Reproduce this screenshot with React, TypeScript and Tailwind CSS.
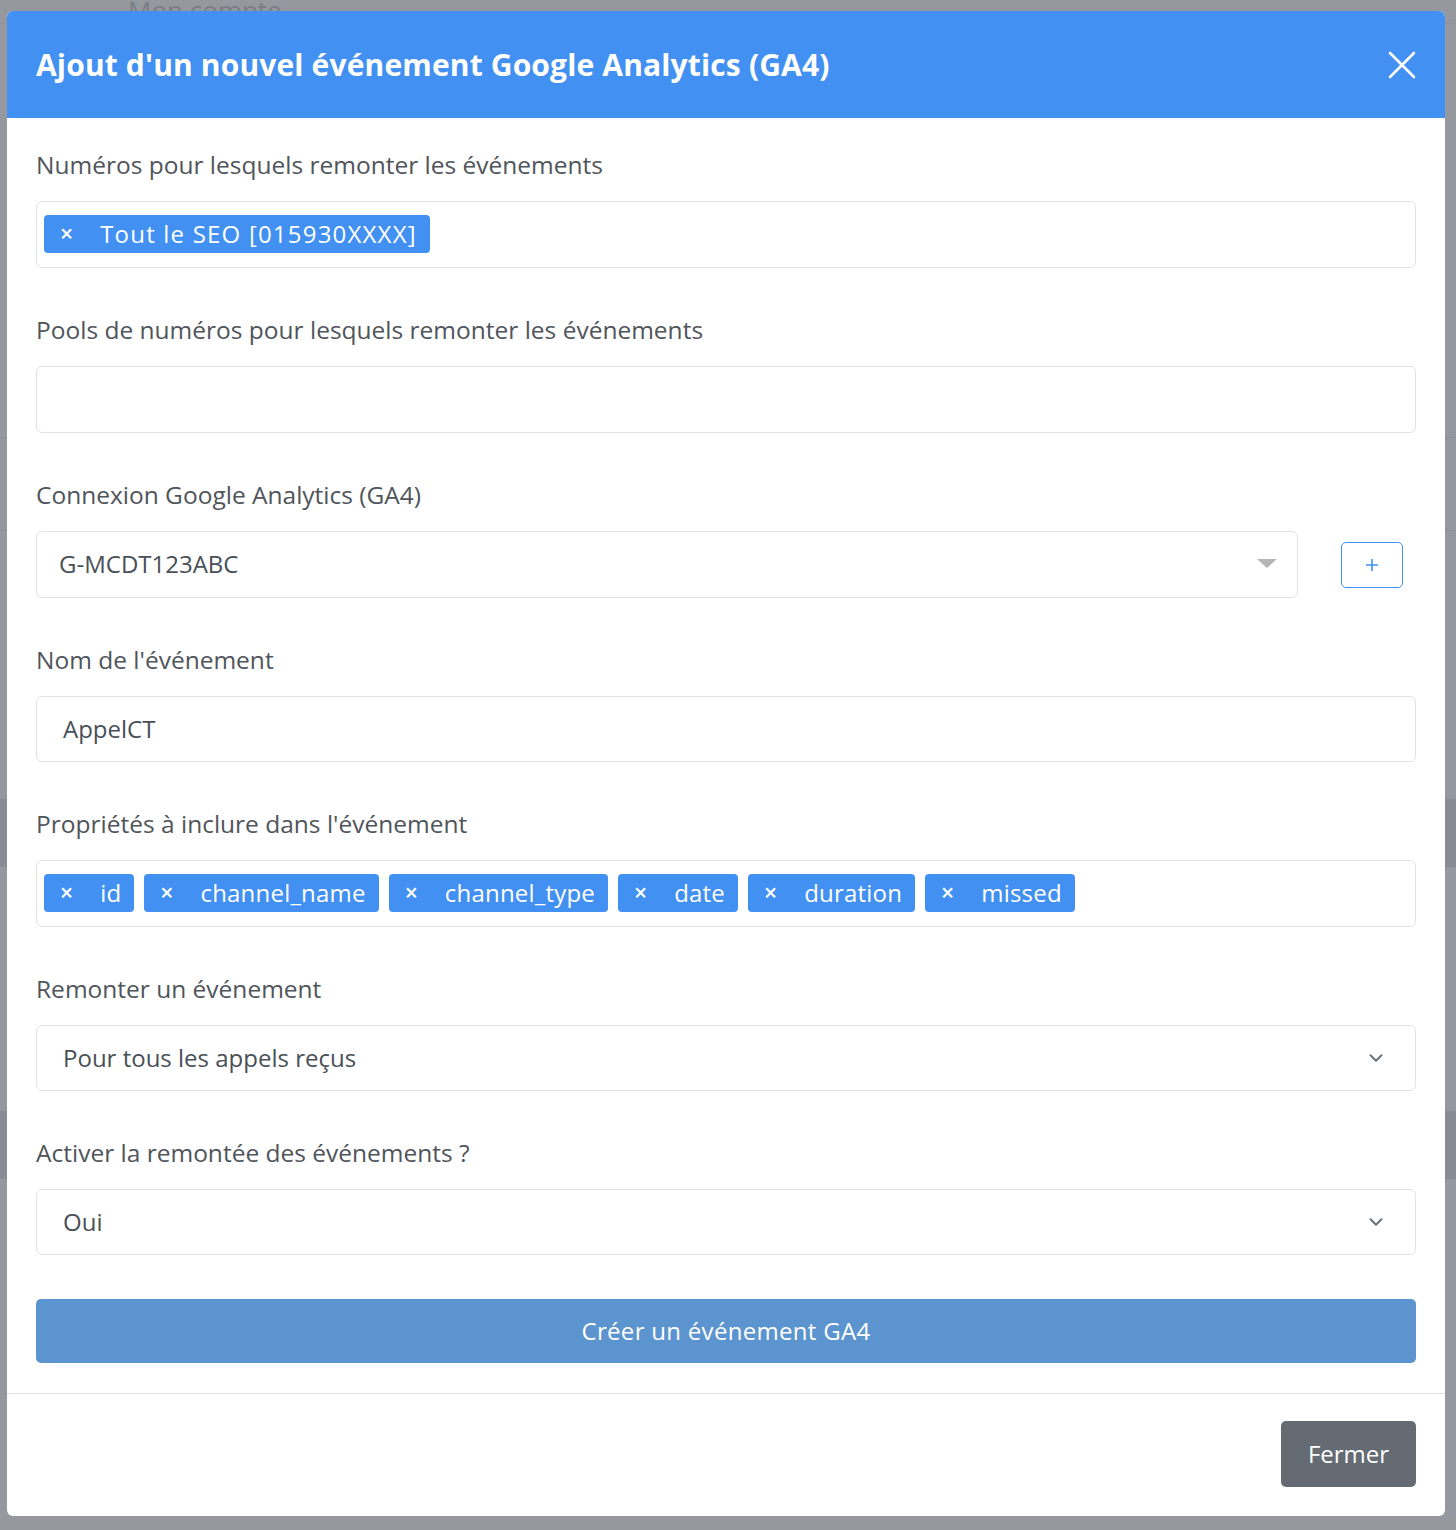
import { ChevronDown } from 'lucide-react';

const font = { fontFamily: '"Open Sans", "Noto Sans", sans-serif' };

const properties = ['id', 'channel_name', 'channel_type', 'date', 'duration', 'missed'];

function Chip({ label, wide }: { label: string; wide?: boolean }) {
  return (
    <span
      className={`flex h-[38px] items-center rounded-[4px] bg-[#4190f2] pl-[16px] pr-[13px] text-[24px] text-white ${
        wide ? 'tracking-[1.2px]' : 'tracking-[0.2px]'
      }`}
    >
      <span className="mr-[27px] text-[23px] font-semibold leading-none tracking-normal">×</span>
      {label}
    </span>
  );
}

function Label({ children }: { children: React.ReactNode }) {
  return <label className="block h-[36px] text-[24.5px] leading-[36px] text-[#4f555b]">{children}</label>;
}

function Field({ label, children }: { label: string; children: React.ReactNode }) {
  return (
    <div className="flex flex-col gap-[18px]">
      <Label>{label}</Label>
      {children}
    </div>
  );
}

function SelectBox({ value }: { value: string }) {
  return (
    <div className="flex h-[66px] items-center justify-between rounded-[6px] border border-[#dfe3e7] pl-[26px] pr-[28px] text-[24px] text-[#495057]">
      <span>{value}</span>
      <ChevronDown className="h-[22px] w-[22px] text-[#6b7178]" strokeWidth={2.2} />
    </div>
  );
}

export default function App() {
  return (
    <div className="relative h-[1530px] w-full overflow-hidden bg-[#95989f]" style={font}>
      {/* page underneath the overlay */}
      <div className="flex flex-col">
        <div className="h-[24px] border-b border-dotted border-[#8a8d95] pl-[128px] text-[26px] leading-[20px] text-[#7b7e86]">
          Mon compte
        </div>
        <div className="mt-[413px] h-[1px] bg-[#8c8f97]" />
        <div className="mt-[92px] h-[1px] bg-[#8c8f97]" />
        <div className="mt-[268px] h-[68px] bg-[#888b93]" />
        <div className="mt-[244px] h-[68px] bg-[#888b93]" />
      </div>

      <div className="absolute left-[7px] top-[11px] flex w-[1438px] flex-col overflow-hidden rounded-[6px] bg-white">
        <div className="flex h-[107px] items-center justify-between bg-[#4190f2] pl-[29px] pr-[29px]">
          <h2 className="text-[30px] font-bold tracking-[0.15px] text-white">
            Ajout d'un nouvel événement Google Analytics (GA4)
          </h2>
          <svg width="28" height="28" viewBox="0 0 28 28" className="text-white">
            <path d="M2 2L26 26M26 2L2 26" stroke="currentColor" strokeWidth="2.6" strokeLinecap="round" />
          </svg>
        </div>

        <div className="flex flex-col gap-[44px] px-[29px] pb-[30px] pt-[29px]">
          <Field label="Numéros pour lesquels remonter les événements">
            <div className="flex h-[67px] items-center rounded-[6px] border border-[#dfe3e7] px-[7px] pb-[2px]">
              <Chip label="Tout le SEO [015930XXXX]" wide />
            </div>
          </Field>

          <Field label="Pools de numéros pour lesquels remonter les événements">
            <div className="h-[67px] rounded-[6px] border border-[#dfe3e7]" />
          </Field>

          <Field label="Connexion Google Analytics (GA4)">
            <div className="flex items-center">
              <div className="flex h-[67px] w-[1262px] items-center justify-between rounded-[6px] border border-[#dfe3e7] pb-[2px] pl-[22px] pr-[20px] text-[24px] text-[#495057]">
                <span>G-MCDT123ABC</span>
                <span className="h-0 w-0 border-x-[10px] border-t-[9px] border-x-transparent border-t-[#b6b6b6]" />
              </div>
              <button className="ml-[43px] flex h-[46px] w-[62px] items-center justify-center rounded-[5px] border border-[#4190f2] text-[#4190f2]">
                <svg width="14" height="14" viewBox="0 0 14 14">
                  <path d="M7 1V13M1 7H13" stroke="currentColor" strokeWidth="1.6" />
                </svg>
              </button>
            </div>
          </Field>

          <Field label="Nom de l'événement">
            <div className="flex h-[66px] items-center rounded-[6px] border border-[#dfe3e7] pl-[26px] text-[24px] text-[#495057]">
              AppelCT
            </div>
          </Field>

          <Field label="Propriétés à inclure dans l'événement">
            <div className="flex h-[67px] items-center gap-[10px] rounded-[6px] border border-[#dfe3e7] px-[7px] pb-[2px]">
              {properties.map((p) => (
                <Chip key={p} label={p} />
              ))}
            </div>
          </Field>

          <Field label="Remonter un événement">
            <SelectBox value="Pour tous les appels reçus" />
          </Field>

          <Field label="Activer la remontée des événements ?">
            <SelectBox value="Oui" />
          </Field>

          <button className="h-[64px] rounded-[5px] bg-[#5b94ce] text-[24px] tracking-[0.3px] text-white">
            Créer un événement GA4
          </button>
        </div>

        <div className="flex justify-end border-t border-[#dde1e5] px-[29px] pb-[29px] pt-[27px]">
          <button className="h-[66px] w-[135px] rounded-[5px] bg-[#646b73] text-[24px] text-white">Fermer</button>
        </div>
      </div>
    </div>
  );
}
